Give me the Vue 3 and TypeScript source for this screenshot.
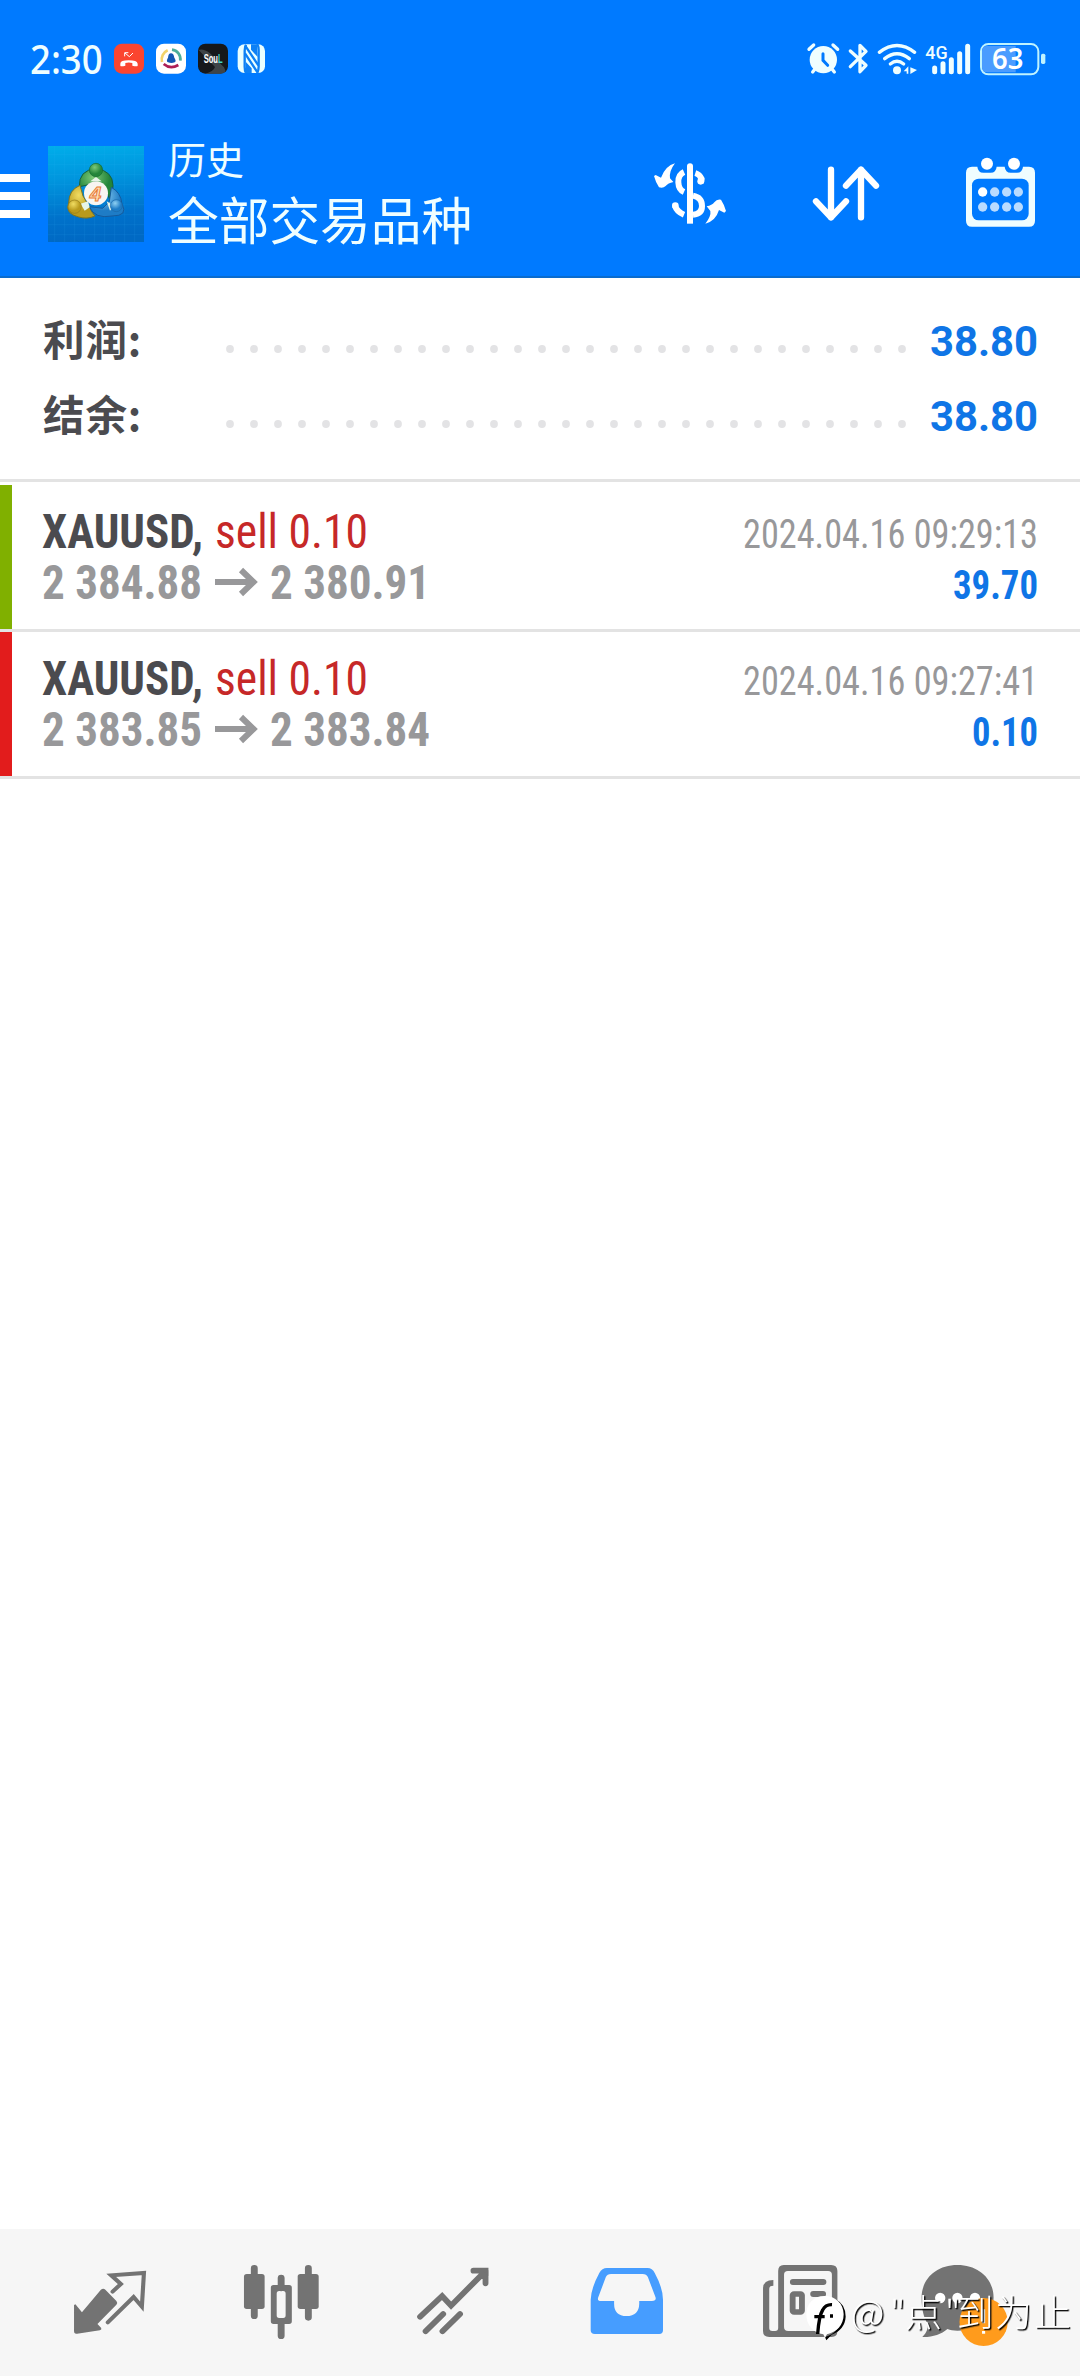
<script setup lang="ts">
interface Deal {
  symbol: string
  action: string
  open: string
  close: string
  closeWidth: number
  time: string
  timeWidth: number
  profit: string
  profitWidth: number
  tone: 'green' | 'red'
}

const summary = [
  { label: '利润:', value: '38.80' },
  { label: '结余:', value: '38.80' },
]

const deals: Deal[] = [
  { symbol: 'XAUUSD,', action: 'sell 0.10', open: '2 384.88', close: '2 380.91', closeWidth: 160, time: '2024.04.16 09:29:13', timeWidth: 295, profit: '39.70', profitWidth: 85, tone: 'green' },
  { symbol: 'XAUUSD,', action: 'sell 0.10', open: '2 383.85', close: '2 383.84', closeWidth: 160, time: '2024.04.16 09:27:41', timeWidth: 295, profit: '0.10', profitWidth: 66, tone: 'red' },
]

const dots = Array.from({ length: 29 }, (_, i) => i)
</script>

<template>
  <div class="screen">
    <header class="top">
      <div class="status">
        <svg width="300" height="80" viewBox="0 0 900 240">
          <text class="clock" x="90" y="163" textLength="218" lengthAdjust="spacingAndGlyphs">2:30</text>
          <rect x="342" y="71" width="90" height="90" rx="24" fill="#fb4530" />
          <path d="M361 137v-6q0-10 25-10t27 10v6q-1 4-16 0v-8q-11-3-21 0v8q-14 4-15 0z" fill="#fff" />
          <path d="M374 109v-11h11M375 99l13 11 11-11" fill="none" stroke="#fff" stroke-width="3" />
          <rect x="468" y="71" width="90" height="90" rx="24" fill="#fff" />
          <path d="M486 126a30 30 0 0 1 17-35" fill="none" stroke="#f3d36a" stroke-width="8" />
          <path d="M516 89a29 29 0 0 1 25 33" fill="none" stroke="#4cae9b" stroke-width="8" />
          <path d="M491 132q20 17 44 3" fill="none" stroke="#ad1f55" stroke-width="8" />
          <path d="M504 127c-6-4-2-10 0-14q1-13 9-13t10 13c2 4 7 10 1 14-7 3-12 3-20 0z" fill="#1257b4" />
          <rect x="594" y="71" width="90" height="90" rx="22" fill="#16181b" />
          <path d="M596 90q14-5 34 10l42 42 5 12q-6 8-18 7h-44q26-6 30-20z" fill="#555c60" opacity=".65" />
          <text class="soul" x="611" y="130" textLength="57" lengthAdjust="spacingAndGlyphs">Sou<tspan class="mint">L</tspan></text>
          <rect x="713" y="73" width="82" height="86" rx="20" fill="#eaffff" />
          <g fill="none" stroke="#0d80f5" stroke-width="7">
            <path d="M738 74q-4 8-4 18v48q0 12 4 20M772 72q4 8 4 18v50q0 10-4 18" />
            <path d="M735 76l40 60M735 100l38 58" />
          </g>
          <path d="M753 73h18l2 38-20-22zM737 125l18 20v14h-17z" fill="#0d80f5" />
        </svg>
        <svg width="300" height="80" viewBox="0 0 900 240">
          <g fill="none" stroke="#effeff" stroke-linecap="round">
            <circle cx="130" cy="119" r="41" fill="#effeff" stroke="none" />
            <path d="M87 88l14-13M173 88l-14-13M98 156l7-9M163 156l-7-9" stroke-width="10" />
            <path d="M129 101v20l14 15" stroke="#007aff" stroke-width="9" />
            <path d="M211 93l47 43-18 19V76l18 18-47 46" stroke-width="10" stroke-linejoin="round" />
            <path d="M298 97q53-41 106 0M314 116q37-30 74 0M331 132q20-16 40 0" stroke-width="10" />
            <circle cx="351" cy="151" r="12" fill="#effeff" stroke="none" />
            <path d="M371 154l14-15v22h-5v-7zM391 142v20l20-12z" fill="#effeff" stroke="none" />
            <path d="M464 144v11M489 131v24M514 119v36M539 101v54M563 79v76" stroke-width="15" />
          </g>
          <rect x="603" y="72" width="172" height="91" rx="22" fill="none" stroke="#bff3ff" stroke-width="6" />
          <path d="M621 78h86v79h-86q-15 0-15-15V93q0-15 15-15z" fill="#4a9cff" />
          <rect x="783" y="101" width="13" height="31" rx="5" fill="#bff3ff" />
          <text class="net" x="436" y="116" textLength="67" lengthAdjust="spacingAndGlyphs">4G</text>
          <text class="battery" x="636" y="147" textLength="94" lengthAdjust="spacingAndGlyphs">63</text>
        </svg>
      </div>
      <div class="bar">
        <div class="menu"><i /><i /><i /></div>
        <svg class="logo" width="96" height="96" viewBox="24 18 288 288">
          <defs>
            <linearGradient id="sky" x1="0" y1="0" x2="0.1" y2="1">
              <stop offset="0" stop-color="#00aeea" />
              <stop offset=".35" stop-color="#0096de" />
              <stop offset=".75" stop-color="#0072cb" />
              <stop offset="1" stop-color="#0069c4" />
            </linearGradient>
            <radialGradient id="leaf" cx=".4" cy=".3"><stop offset="0" stop-color="#7cc978" /><stop offset="1" stop-color="#23853a" /></radialGradient>
            <radialGradient id="gold" cx=".4" cy=".3"><stop offset="0" stop-color="#f0dc62" /><stop offset="1" stop-color="#b99a1c" /></radialGradient>
            <radialGradient id="aqua" cx=".4" cy=".3"><stop offset="0" stop-color="#8fd0f2" /><stop offset="1" stop-color="#1e7cc6" /></radialGradient>
          </defs>
          <rect x="24" y="18" width="288" height="288" fill="url(#sky)" />
          <path d="M24 44h288M24 74h288M24 104h288M24 134h288M24 164h288M24 194h288M24 224h288M24 254h288M24 284h288M44 18v288M74 18v288M104 18v288M134 18v288M164 18v288M194 18v288M224 18v288M254 18v288M284 18v288" stroke="#3bc0ff" stroke-opacity=".16" stroke-width="2" />
          <g stroke="#17603c" stroke-width="3">
            <path d="M118 140q-2-50 50-54 50 6 51 50 2 20-11 40l-10-25-30-27-30 12z" fill="url(#leaf)" />
            <path d="M120 136q-34 14-34 53-12 32 30 42 25 8 49-3-12-12-18-30l-18-30z" fill="url(#gold)" stroke="#7a7424" />
            <path d="M214 142q28 14 32 50 20 36-30 36-52 10-68-28l40 5 20-20z" fill="url(#aqua)" stroke="#155a9c" />
          </g>
          <path d="M151 124l17-13 17 13zM122 191l22-7 5 18-15 10zM200 184l10 28 12-15z" fill="#e6f5e8" />
          <circle cx="168" cy="90" r="20" fill="url(#leaf)" stroke="#176b30" stroke-width="2" />
          <circle cx="104" cy="200" r="20" fill="url(#gold)" stroke="#927a1a" stroke-width="2" />
          <circle cx="229" cy="197" r="18" fill="url(#aqua)" stroke="#1a68a8" stroke-width="2" />
          <circle cx="168" cy="160" r="36" fill="#f8f5f2" />
          <text class="four" x="149" y="184">4</text>
        </svg>
        <div class="titles">
          <div class="small">历史</div>
          <div class="big">全部交易品种</div>
        </div>
        <div class="actions">
          <svg width="80" height="80" viewBox="90 70 240 240">
            <path d="M210 108v174" stroke="#fff" stroke-width="18" />
            <circle cx="210" cy="110" r="9" fill="#fff" />
            <path d="M192 127q-18 8-17 31 1 22 17 29M226 130q13 4 19 18q0 7-2 9M165 228q5 18 27 27M219 198q27 5 27 31 0 24-27 26" fill="none" stroke="#fff" stroke-width="18" />
            <circle cx="242" cy="155" r="10" fill="#fff" />
            <circle cx="166" cy="228" r="10" fill="#fff" />
            <path d="M165 101q-18 23-15 45l10 11q-16 3-23 12-8 8-20 4-10-15-15-34l5-3 16 8q14-36 42-43z" fill="#fff" />
            <path d="M256 282q18-23 15-38l-11-14q16-3 23-12 8-11 20-8 10 15 15 34l-5 5-16-8q-10 33-41 41z" fill="#fff" />
          </svg>
          <svg width="80" height="80" viewBox="570 70 240 240" fill="none" stroke="#fff" stroke-width="19" stroke-linecap="round" stroke-linejoin="round">
            <path d="M633 120v143M588 215l45 48 45-48M723 263V120M678 168l45-48 45 48" />
          </svg>
          <svg width="80" height="80" viewBox="1020 70 240 240">
            <path d="M1056 111h16q2 18 18 18h22q16 0 18-18h24q2 18 18 18h19q16 0 18-18h18q18 0 18 18v144q0 18-18 18h-171q-18 0-18-18V129q0-18 18-18z" fill="#effdff" />
            <rect x="1056" y="147" width="170" height="125" rx="20" fill="#007aff" />
            <circle cx="1101" cy="102" r="18" fill="#fff" />
            <circle cx="1182" cy="102" r="18" fill="#fff" />
            <circle cx="1088" cy="187" r="14" fill="#fff" />
            <g fill="#b9dbff">
              <circle cx="1124" cy="187" r="14" /><circle cx="1160" cy="187" r="14" /><circle cx="1195" cy="187" r="14" />
              <circle cx="1088" cy="232" r="14" /><circle cx="1124" cy="232" r="14" /><circle cx="1160" cy="232" r="14" /><circle cx="1195" cy="232" r="14" />
            </g>
          </svg>
        </div>
      </div>
    </header>

    <section class="summary">
      <div v-for="row in summary" :key="row.label" class="line">
        <div class="label">{{ row.label }}</div>
        <svg class="leader" width="680" height="8" viewBox="0 0 680 8">
          <circle v-for="d in dots" :key="d" :cx="4 + d * 24" cy="4" r="3.9" fill="#e3e3e5" />
        </svg>
        <svg class="value" width="110" height="50">
          <text x="1" y="40" textLength="108" lengthAdjust="spacingAndGlyphs">{{ row.value }}</text>
        </svg>
      </div>
    </section>

    <section class="deals">
      <article v-for="deal in deals" :key="deal.time" class="deal">
        <div class="stripe" :class="deal.tone" />
        <svg class="left" width="420" height="144">
          <text class="symbol" x="0" y="63" textLength="161" lengthAdjust="spacingAndGlyphs">{{ deal.symbol }}</text>
          <text class="action" x="173" y="63" textLength="153" lengthAdjust="spacingAndGlyphs">{{ deal.action }}</text>
          <text class="price" x="0" y="114" textLength="160" lengthAdjust="spacingAndGlyphs">{{ deal.open }}</text>
          <path d="M173 97h39M199 85l12.500 12-12.500 12" fill="none" stroke="#98989a" stroke-width="6" />
          <text class="price" x="228" y="114" :textLength="deal.closeWidth" lengthAdjust="spacingAndGlyphs">{{ deal.close }}</text>
        </svg>
        <svg class="right" width="340" height="144">
          <text class="time" :x="320 - deal.timeWidth" y="63" :textLength="deal.timeWidth" lengthAdjust="spacingAndGlyphs">{{ deal.time }}</text>
          <text class="profit" :x="320 - deal.profitWidth" y="114" :textLength="deal.profitWidth" lengthAdjust="spacingAndGlyphs">{{ deal.profit }}</text>
        </svg>
      </article>
    </section>

    <nav class="tabs">
      <svg viewBox="69.7 57 500 441" preserveAspectRatio="none" fill="#737373">
        <path d="M293 239q7-5 13 0l32 34q5 6 0 11l-55 58 11 12q2 6-4 7l-66 10q-9 2-9-8v-78l4-2 19 24z" />
        <path d="M327 245l24-23-28-26 95-7-6 101-24-29-75 76" fill="none" stroke="#737373" stroke-width="12" stroke-linejoin="miter" stroke-linecap="round" />
      </svg>
      <svg viewBox="569.7 57 500 441" preserveAspectRatio="none" fill="#737373">
        <path d="M739 175v142M896 175v147M817 204v30M817 338v39" stroke="#737373" stroke-width="20" stroke-linecap="round" />
        <rect x="709" y="192" width="60" height="105" rx="8" />
        <rect x="865" y="192" width="61" height="105" rx="8" />
        <path fill-rule="evenodd" d="M795 225h45q8 0 8 8v101q0 8-8 8h-45q-8 0-8-8V233q0-8 8-8zM811 243q-7 0-7 8v65q0 8 7 8h12q7 0 7-8v-65q0-8-7-8z" />
      </svg>
      <svg viewBox="1069.7 57 500 441" preserveAspectRatio="none" fill="none" stroke="#737373" stroke-width="17" stroke-linecap="round" stroke-linejoin="miter">
        <path d="M1221 320l64-62 26 29 92-96M1376 182h35v38M1288 312l-51 52M1337 312l-51 52" />
        <path d="M1397 176h16q6 0 6 6v16z" fill="#737373" stroke="none" />
      </svg>
      <svg viewBox="1.7 57 500 441" preserveAspectRatio="none">
        <path fill="#469dff" fill-rule="evenodd" d="M193 174h118q14 0 21 15 24 46 24 80v92q0 11-11 11H158q-12 0-12-11v-92q1-34 25-80 8-15 22-15zM205 192q-11 0-15 9l-22 61q-4 11 8 11h38v8q0 37 36 37t37-37v-8h37q14 0 10-12l-22-60q-4-9-15-9z" />
      </svg>
      <svg viewBox="501.7 57 500 441" preserveAspectRatio="none">
        <path fill="#737373" fill-rule="evenodd" d="M707 165h138q18 0 18 18v181q0 17-17 17H665q-18 0-18-17V236q0-26 30-26v17q-12 0-12 9v118q0 9 9 9h8q9 0 9-9V183q0-18 16-18zM719 183q-11 0-11 11v157q0 12 12 12h115q12 0 12-12V194q0-11-11-11z" />
        <path d="M734 216h88M793 252h28" stroke="#737373" stroke-width="18" stroke-linecap="round" />
        <rect x="733" y="252" width="27" height="54" rx="4" fill="none" stroke="#737373" stroke-width="17" />
      </svg>
      <svg viewBox="1001.7 57 500 441" preserveAspectRatio="none">
        <path fill="#737373" d="M1212 165c62 0 105 42 105 98s-44 99-105 99c-12 0-21-2-29-5-18 16-44 25-73 24 10-10 17-22 16-39-12-20-18-44-18-79 0-56 42-98 104-98z" />
        <g fill="#fff"><ellipse cx="1162" cy="264" rx="15" ry="16" /><ellipse cx="1212" cy="264" rx="15" ry="16" /><ellipse cx="1263" cy="264" rx="15" ry="16" /></g>
        <ellipse cx="1288" cy="336" rx="70" ry="72" fill="#ff9b1c" />
        <path d="M1288 298v42M1288 363v8" stroke="#fff" stroke-width="9" />
      </svg>
    </nav>

    <svg class="watermark" width="350" height="120" viewBox="0 0 1050 360">
      <path d="M313 176q34 15 34 54-2 38-42 54l-16 17-4-10q44-13 48-58 2-30-20-53z" fill="#000" />
      <path d="M283 168c34 0 58 23 58 55 0 33-22 54-50 60l-6 10-5-10c-30-5-51-26-51-60 0-32 22-55 54-55z" fill="#fff" />
      <path d="M263 282q4-55 15-72 9-17 28-16M253 230h31M300 228h9" fill="none" stroke="#000" stroke-width="10" />
      <g class="shade">
        <text y="261" x="362 480 525 645 680 795 912">@"点"到为止</text>
      </g>
    </svg>
  </div>
</template>

<style>
body {
  margin: 0;
  background: #fff;
}
</style>

<style scoped>
.screen {
  position: relative;
  display: flex;
  flex-direction: column;
  width: 1080px;
  height: 2376px;
  overflow: hidden;
  background: #fff;
  font-family: Roboto, "Noto Sans CJK SC", sans-serif;
}
svg {
  display: block;
  flex: none;
}
.top {
  height: 276px;
  background: #007aff;
  border-bottom: 2px solid #0a6cce;
}
.status {
  display: flex;
  justify-content: space-between;
  height: 100px;
  padding-top: 20px;
  box-sizing: border-box;
}
.clock {
  font: 500 120px "Noto Sans", sans-serif;
  fill: #effeff;
}
.soul {
  font: bold 37px "Liberation Sans", sans-serif;
  fill: #fff;
}
.mint {
  fill: #43d6c4;
}
.net {
  font: 500 57px Roboto, sans-serif;
  fill: #effeff;
}
.battery {
  font: 600 86px "Noto Sans", sans-serif;
  fill: #fff;
}
.bar {
  display: flex;
  height: 176px;
}
.menu {
  display: flex;
  flex-direction: column;
  gap: 10px;
  width: 30px;
  padding-top: 74px;
}
.menu i {
  height: 8px;
  background: #fff;
}
.logo {
  margin: 46px 0 0 18px;
}
.four {
  font: italic bold 62px "Liberation Sans", sans-serif;
  fill: #ffe0b8;
  stroke: #e87a34;
  stroke-width: 3px;
}
.titles {
  margin-left: 24px;
  padding-top: 35px;
  color: #effeff;
  font-family: "Noto Sans CJK SC", sans-serif;
  white-space: nowrap;
}
.small {
  font-size: 38px;
  line-height: 46px;
}
.big {
  font-size: 50.7px;
  line-height: 62px;
  margin-top: 6px;
}
.actions {
  display: flex;
  gap: 80px;
  margin: 53px 40px 0 auto;
}
.actions svg:last-child {
  margin-left: -10px;
}
.summary {
  height: 204px;
  padding: 28px 43px 0;
  box-sizing: border-box;
  border-bottom: 3px solid #e3e3e3;
}
.line {
  display: flex;
  height: 75px;
}
.label {
  width: 183px;
  margin-top: 2px;
  font: bold 41.5px/60px "Noto Sans CJK SC", sans-serif;
  letter-spacing: 0.9px;
  color: #4b4b4f;
}
.leader {
  margin-top: 39px;
}
.value {
  margin: 10px -2px 0 auto;
  font: bold 42px Roboto, sans-serif;
  fill: #0f75e6;
}
.deals {
  padding-top: 3px;
}
.deal {
  display: flex;
  height: 144px;
  border-bottom: 3px solid #e3e3e3;
}
.stripe {
  width: 12px;
  margin-right: 30px;
}
.green {
  background: #80b000;
}
.red {
  background: #e21c1c;
}
.symbol {
  font: bold 48px Roboto, sans-serif;
  font-stretch: 75%;
  fill: #4b4b4f;
}
.action {
  font: 400 48px Roboto, sans-serif;
  font-stretch: 75%;
  fill: #c62828;
}
.price {
  font: bold 48px Roboto, sans-serif;
  font-stretch: 75%;
  fill: #98989a;
}
.right {
  margin: 0 22px 0 auto;
}
.time {
  font: 400 40px Roboto, sans-serif;
  font-stretch: 75%;
  fill: #98989a;
}
.profit {
  font: bold 40px Roboto, sans-serif;
  font-stretch: 75%;
  fill: #0f75e6;
}
.tabs {
  display: flex;
  height: 147px;
  margin-top: auto;
  padding-left: 24px;
  background: #f6f6f6;
}
.tabs svg {
  width: 172.18px;
  height: 147px;
}
.watermark {
  position: absolute;
  left: 730px;
  top: 2240px;
}
.watermark text {
  font: 300 111px "Noto Sans CJK SC", sans-serif;
  fill: #fff;
}
.shade {
  filter: drop-shadow(4px 4px 0 #000);
}
</style>
